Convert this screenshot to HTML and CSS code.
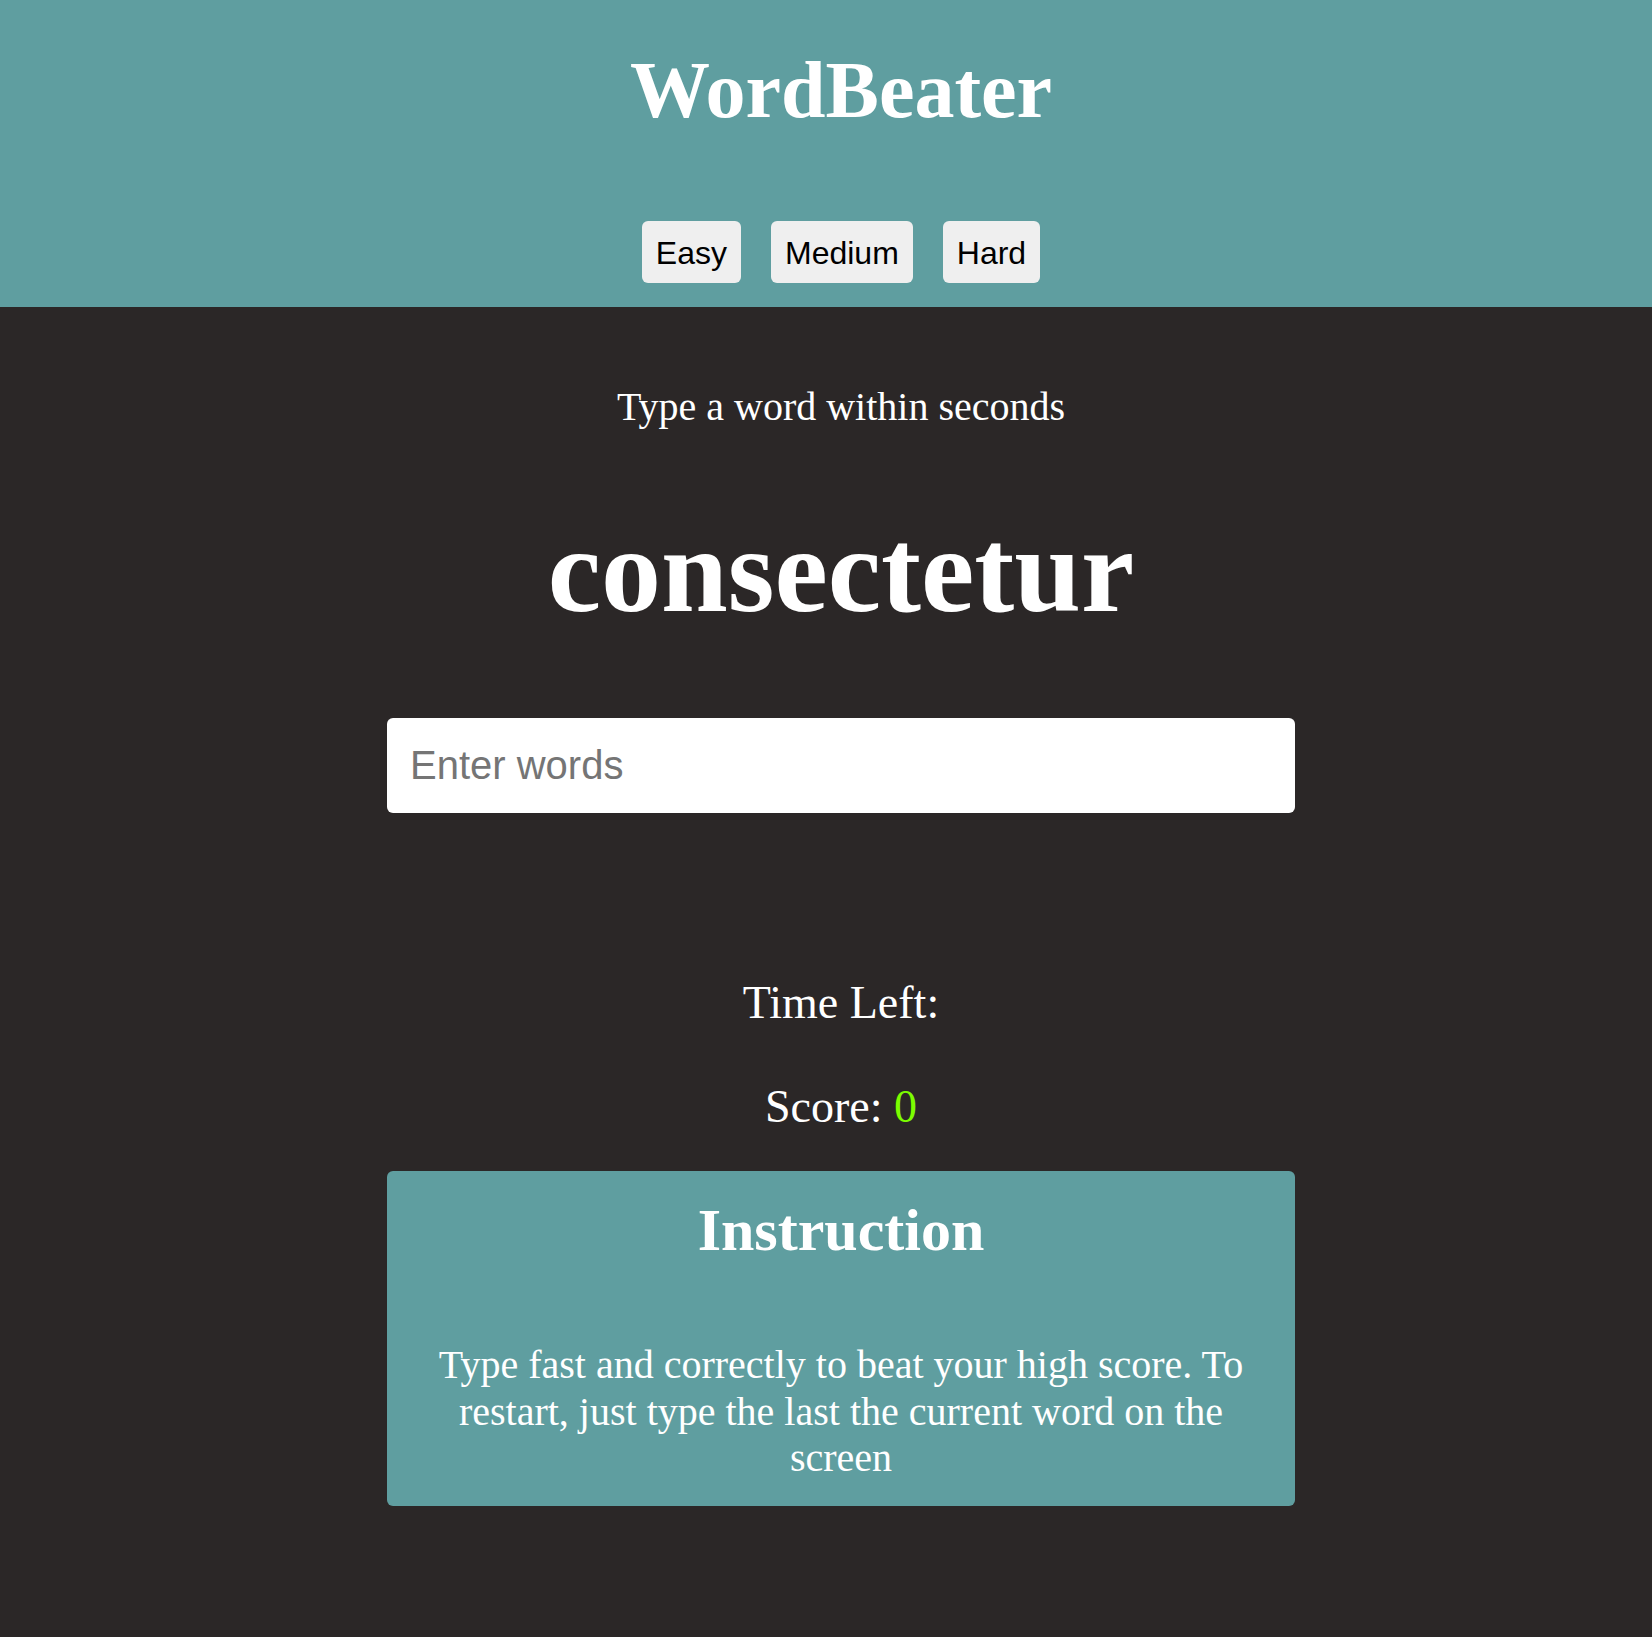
FILE: index.html
```html
<!DOCTYPE html>
<html lang="en">
<head>
<meta charset="utf-8">
<title>WordBeater</title>
<link rel="stylesheet" href="styles.css">
</head>
<body>
<header class="header">
  <div class="header-inner">
    <h1 class="title">WordBeater</h1>
    <div class="levels">
      <button class="level-btn">Easy</button>
      <button class="level-btn">Medium</button>
      <button class="level-btn">Hard</button>
    </div>
  </div>
</header>
<main class="main">
  <p class="lead">Type a word within seconds</p>
  <h2 class="current-word">consectetur</h2>
  <input class="word-input" type="text" placeholder="Enter words">
  <p class="stat stat-time">Time Left: <span class="time"></span></p>
  <p class="stat stat-score">Score: <span class="score">0</span></p>
  <section class="card">
    <h3 class="card-title">Instruction</h3>
    <p class="card-text">Type fast and correctly to beat your high score. To restart, just type the last the current word on the screen</p>
  </section>
</main>
</body>
</html>
```
FILE: styles.css
```css
html, body {
  margin: 0;
  padding: 0;
}
body {
  background: #2b2727;
  color: #ffffff;
  font-family: "Liberation Serif", "Times New Roman", serif;
  min-height: 1637px;
}
.header {
  background: #5f9ea0;
}
.header-inner {
  padding: 50px 0 24px 30px;
  display: flex;
  flex-direction: column;
  align-items: center;
}
.title {
  margin: 0;
  font-size: 80px;
  line-height: 80px;
  font-weight: bold;
}
.levels {
  margin-top: 91px;
  display: flex;
  gap: 30px;
}
.level-btn {
  height: 62px;
  padding: 2px 14px 0;
  border: none;
  border-radius: 6px;
  background: #efefef;
  color: #000;
  font-family: "Liberation Sans", Arial, sans-serif;
  font-size: 32px;
  line-height: 1;
}
.main {
  padding: 0 0 0 30px;
  display: flex;
  flex-direction: column;
  align-items: center;
}
.lead {
  margin: 77px 0 0;
  font-size: 40px;
  line-height: 45px;
}
.current-word {
  margin: 82px 0 0;
  font-size: 120px;
  line-height: 120px;
  font-weight: bold;
}
.word-input {
  margin-top: 87px;
  width: 908px;
  height: 95px;
  box-sizing: border-box;
  border: none;
  border-radius: 6px;
  background: #fff;
  padding: 0 23px;
  font-family: "Liberation Sans", Arial, sans-serif;
  font-size: 40px;
  color: #000;
  outline: none;
}
.word-input::placeholder {
  color: #757575;
}
.stat {
  margin: 0;
  font-size: 46px;
  line-height: 52px;
}
.stat-time {
  margin-top: 164px;
}
.stat-score {
  margin-top: 52px;
}
.score {
  color: #7cfc00;
}
.card {
  margin-top: 38px;
  width: 908px;
  box-sizing: border-box;
  background: #5f9ea0;
  border-radius: 6px;
  padding: 25px 40px 24px;
  text-align: center;
}
.card-title {
  margin: 0;
  font-size: 60px;
  line-height: 68px;
  font-weight: bold;
}
.card-text {
  margin: 78px 0 0;
  font-size: 40px;
  line-height: 46.5px;
}
```
